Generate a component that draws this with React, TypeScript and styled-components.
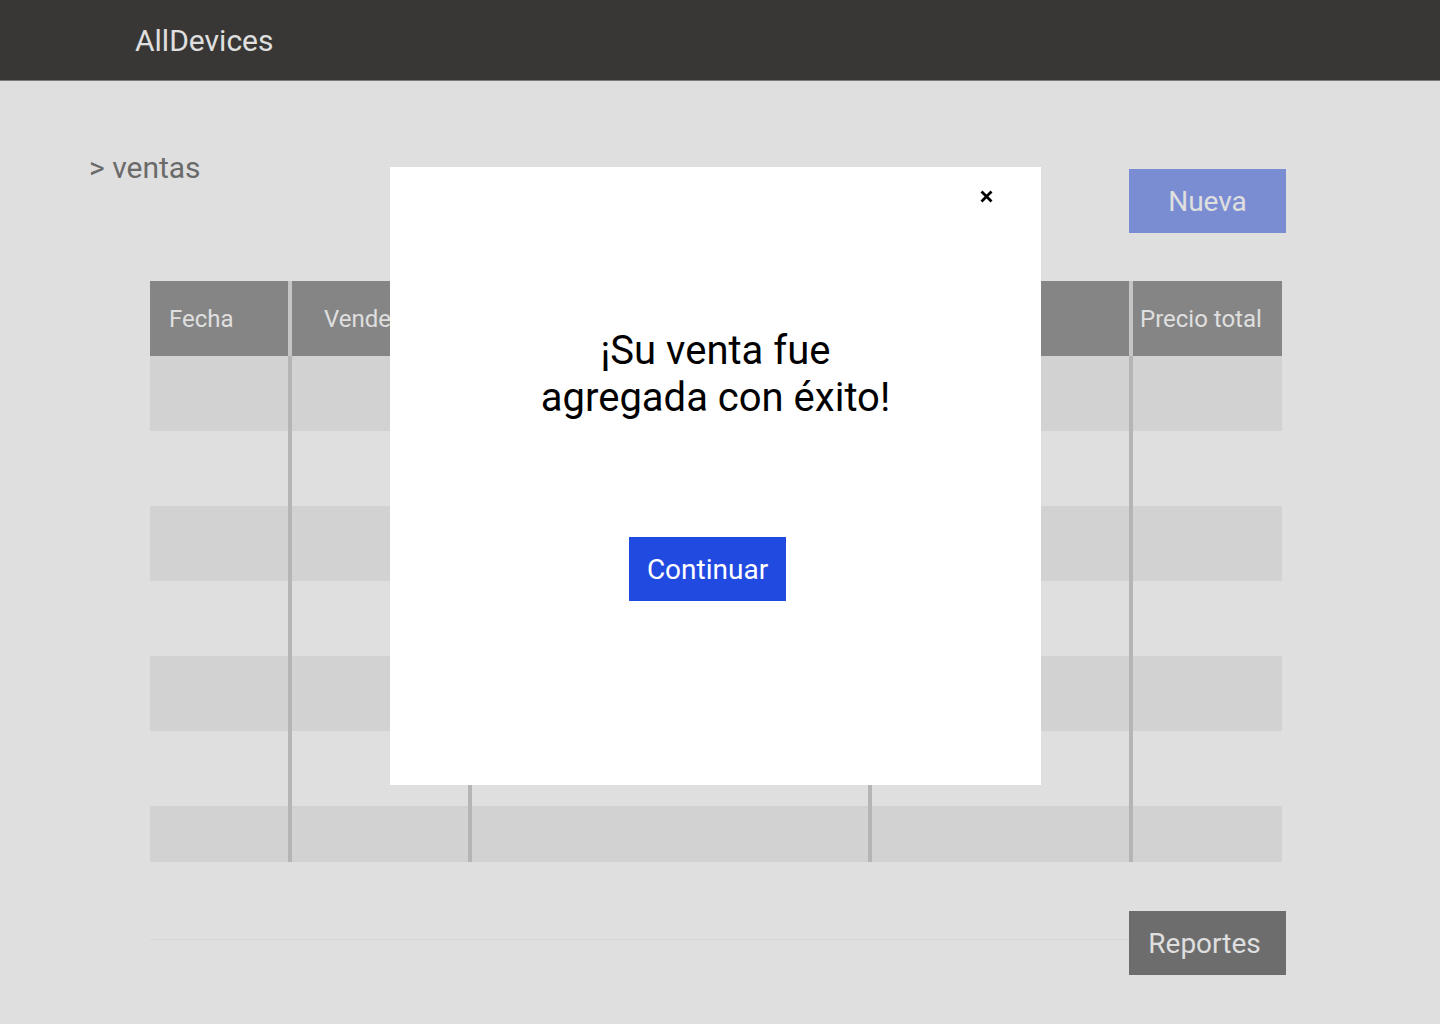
import React from 'react';
import styled, { createGlobalStyle } from 'styled-components';

const GlobalStyle = createGlobalStyle`
  html, body {
    margin: 0;
    padding: 0;
    background: #ffffff;
    font-family: Roboto, 'Liberation Sans', Arial, sans-serif;
  }
  * {
    box-sizing: border-box;
  }
`;

const Page = styled.div`
  position: relative;
  width: 1440px;
  min-height: 1024px;
  background: #ffffff;
  overflow: hidden;
`;

const Header = styled.header`
  height: 81px;
  background: #403f3d;
  border-bottom: 1px solid #8c8c8c;
  display: flex;
  align-items: center;
  padding-left: 135px;
`;

const Brand = styled.div`
  color: #ffffff;
  font-size: 30px;
  line-height: 35px;
`;

const Main = styled.main`
  padding: 0 154px 0 90px;
`;

const TopRow = styled.div`
  display: flex;
  justify-content: space-between;
  align-items: flex-start;
  margin-top: 69px;
`;

const Breadcrumb = styled.div`
  color: #7a7a7a;
  font-size: 30px;
  line-height: 35px;
  margin-left: -1px;
`;

const ActionButton = styled.button<{ $bg: string; $shift?: number }>`
  width: 157px;
  height: 64px;
  border: none;
  border-radius: 0;
  background: ${(p) => p.$bg};
  color: #ffffff;
  font-family: Roboto, 'Liberation Sans', Arial, sans-serif;
  font-size: 28px;
  cursor: pointer;
  padding: 0 ${(p) => p.$shift ?? 0}px 0 0;
`;

const NewButton = styled(ActionButton)`
  margin-top: 19px;
`;

const Table = styled.div`
  margin: 48px 0 0 60px;
  width: 1132px;
  height: 581px;
  overflow: hidden;
  display: grid;
  grid-template-columns: 142px 180px 400px 261px 149px;
  grid-auto-rows: 75px;
`;

const HeadCell = styled.div<{ $pad: number; $last?: boolean }>`
  background: #989898;
  color: #ffffff;
  font-size: 24px;
  display: flex;
  align-items: center;
  padding-left: ${(p) => p.$pad}px;
  border-right: ${(p) => (p.$last ? 'none' : '4px solid #e2e2e2')};
  white-space: nowrap;
  overflow: hidden;
`;

const BodyCell = styled.div<{ $striped: boolean; $last?: boolean }>`
  background: ${(p) => (p.$striped ? '#f1f1f1' : '#ffffff')};
  border-right: ${(p) => (p.$last ? 'none' : '4px solid #cfcfcf')};
`;

const Footer = styled.div`
  display: flex;
  align-items: flex-start;
  margin-top: 49px;
`;

const FooterLine = styled.div`
  flex: 1;
  height: 1px;
  margin: 28px 0 0 60px;
  background: #f5f5f5;
`;

const Overlay = styled.div`
  position: absolute;
  inset: 0;
  background: rgba(0, 0, 0, 0.125);
  display: flex;
  justify-content: center;
  align-items: flex-start;
  padding: 167px 9px 0 0;
`;

const Modal = styled.div`
  position: relative;
  width: 651px;
  height: 618px;
  background: #ffffff;
  display: flex;
  flex-direction: column;
  align-items: center;
`;

const CloseButton = styled.button`
  position: absolute;
  top: 22px;
  right: 48px;
  width: 14px;
  height: 14px;
  border: none;
  background: transparent;
  padding: 0;
  display: flex;
  align-items: center;
  justify-content: center;
  cursor: pointer;
`;

const Title = styled.h2`
  margin: 160px 0 0;
  font-size: 40px;
  font-weight: 400;
  line-height: 47px;
  color: #000000;
  text-align: center;
`;

const ContinueButton = styled(ActionButton)`
  margin-top: 116px;
  margin-left: -16px;
`;

const columns = [
  { label: 'Fecha', pad: 19 },
  { label: 'Vendedor', pad: 32 },
  { label: 'Productos', pad: 24 },
  { label: 'Cliente', pad: 24 },
  { label: 'Precio total', pad: 7 },
];

const rowCount = 7;

export default function App() {
  return (
    <Page>
      <GlobalStyle />
      <Header>
        <Brand>AllDevices</Brand>
      </Header>
      <Main>
        <TopRow>
          <Breadcrumb>&gt; ventas</Breadcrumb>
          <NewButton $bg="#8ca2f2">Nueva</NewButton>
        </TopRow>
        <Table>
          {columns.map((c, i) => (
            <HeadCell key={c.label} $pad={c.pad} $last={i === columns.length - 1}>
              {c.label}
            </HeadCell>
          ))}
          {Array.from({ length: rowCount }).map((_, r) =>
            columns.map((c, i) => (
              <BodyCell
                key={`${r}-${c.label}`}
                $striped={r % 2 === 0}
                $last={i === columns.length - 1}
              />
            ))
          )}
        </Table>
        <Footer>
          <FooterLine />
          <ActionButton $bg="#7d7d7d" $shift={6}>Reportes</ActionButton>
        </Footer>
      </Main>
      <Overlay>
        <Modal>
          <CloseButton aria-label="Cerrar">
            <svg width="13" height="13" viewBox="0 0 13 13">
              <path d="M1.5 1.5 L11.5 11.5 M11.5 1.5 L1.5 11.5" stroke="#000" strokeWidth="2.8" />
            </svg>
          </CloseButton>
          <Title>
            ¡Su venta fue
            <br />
            agregada con éxito!
          </Title>
          <ContinueButton $bg="#214ae1">Continuar</ContinueButton>
        </Modal>
      </Overlay>
    </Page>
  );
}
